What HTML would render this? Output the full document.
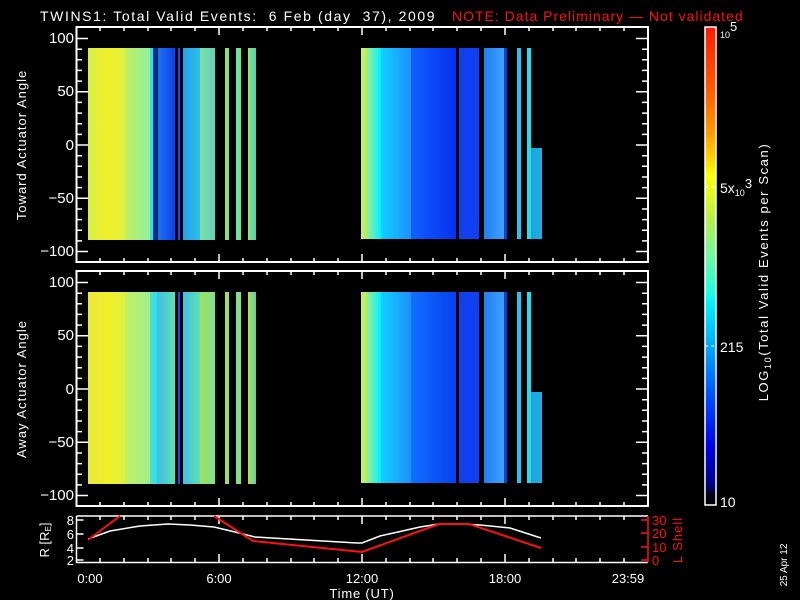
<!DOCTYPE html>
<html><head><meta charset="utf-8"><style>
html,body{margin:0;padding:0;background:#000;}
body{width:800px;height:600px;position:relative;overflow:hidden;font-family:"Liberation Sans",sans-serif;color:#fff;}
.t{position:absolute;white-space:nowrap;font-size:14px;line-height:14px;}
.blk{position:absolute;}
</style></head><body>

<div class="t" style="left:40px;top:9px;font-size:14px;letter-spacing:1.6px;">TWINS1: Total Valid Events:&nbsp; 6 Feb (day&nbsp; 37), 2009</div>
<div class="t" style="left:452px;top:9px;color:#ff1010;font-size:14px;letter-spacing:1px;">NOTE: Data Preliminary &#8212; Not validated</div>

<!-- data panel 1 -->
<div class="blk" style="left:88px;top:48px;width:170px;height:192px;background:linear-gradient(90deg,#d8f048 0px,#f0f028 20px,#e0f040 37px,#c0f060 37px,#90f0a0 62px,#30e0f0 62px,#30e0f0 65px,#0a2a80 65px,#0a2a80 70px,#2070f0 70px,#1040e8 87px,#000 87px,#000 90px,#1050f0 90px,#1050f0 92px,#000 92px,#000 95px,#20a0f0 95px,#30c0e0 112px,#80e0a0 112px,#60d0c0 127px,#000 127px,#000 137px,#90e070 137px,#90e070 141px,#000 141px,#000 148px,#70e0a0 148px,#70e0a0 153px,#000 153px,#000 160px,#a0e060 160px,#40d0d0 168px,#000 168px);"></div>
<div class="blk" style="left:361px;top:48px;width:181px;height:191px;background:linear-gradient(90deg,#e0f040 0px,#40f0e0 14px,#00f0ff 20px,#10d0ff 20px,#2090ff 50px,#1060ff 50px,#0830f0 95px,#000 95px,#000 98px,#1040f0 98px,#1040f0 118px,#000 118px,#000 123px,#2080f0 123px,#40a0ff 143px,#1040d0 143px,#1040d0 146px,#000 146px,#000 156px,#30c0f0 156px,#30c0f0 160px,#000 160px,#000 166px,#20e0f0 166px,#20e0f0 170px,#20a0e0 170px,#20b0e0 181px);"></div>
<div class="blk" style="left:531px;top:48px;width:11px;height:100px;background:#000;"></div>
<!-- data panel 2 -->
<div class="blk" style="left:88px;top:292px;width:170px;height:192px;background:linear-gradient(90deg,#e8e840 0px,#f0f028 20px,#e0f040 37px,#c0f060 37px,#a0f090 62px,#50e0d0 62px,#30e0f0 68px,#40c0e0 70px,#60e0b0 87px,#000 87px,#000 90px,#1050f0 90px,#1050f0 92px,#000 92px,#000 95px,#40c0e0 95px,#60e0b0 112px,#a0e060 112px,#80e090 127px,#000 127px,#000 137px,#a0e060 137px,#a0e060 141px,#000 141px,#000 148px,#80e090 148px,#80e090 153px,#000 153px,#000 160px,#b0e050 160px,#60d0b0 168px,#000 168px);"></div>
<div class="blk" style="left:361px;top:292px;width:181px;height:191px;background:linear-gradient(90deg,#e0f040 0px,#40f0e0 14px,#00f0ff 20px,#10d0ff 20px,#2090ff 50px,#1070ff 50px,#0840f0 95px,#000 95px,#000 98px,#1040f0 98px,#1040f0 118px,#000 118px,#000 123px,#2080f0 123px,#40a0ff 143px,#1040d0 143px,#1040d0 146px,#000 146px,#000 156px,#30c0f0 156px,#30c0f0 160px,#000 160px,#000 166px,#20e0f0 166px,#20e0f0 170px,#20a0e0 170px,#20b0e0 181px);"></div>
<div class="blk" style="left:531px;top:292px;width:11px;height:100px;background:#000;"></div>

<svg width="800" height="600" style="position:absolute;left:0;top:0;" xmlns="http://www.w3.org/2000/svg">
<defs>
<g id="yt" stroke="#fff" stroke-width="1.5">
<path d="M76 38.5h12M76 91.8h12M76 145h12M76 198.3h12M76 251.5h12M648 38.5h-12M648 91.8h-12M648 145h-12M648 198.3h-12M648 251.5h-12"/>
<path d="M76 49.2h6M76 59.8h6M76 70.4h6M76 81.1h6M76 102.4h6M76 113.1h6M76 123.7h6M76 134.4h6M76 155.7h6M76 166.3h6M76 177h6M76 187.6h6M76 209h6M76 219.6h6M76 230.3h6M76 240.9h6M648 49.2h-6M648 59.8h-6M648 70.4h-6M648 81.1h-6M648 102.4h-6M648 113.1h-6M648 123.7h-6M648 134.4h-6M648 155.7h-6M648 166.3h-6M648 177h-6M648 187.6h-6M648 209h-6M648 219.6h-6M648 230.3h-6M648 240.9h-6"/>
<path d="M219 27v8M362 27v8M505 27v8M219 262v-8M362 262v-8M505 262v-8M100 27v4M124 27v4M148 27v4M171 27v4M195 27v4M243 27v4M267 27v4M291 27v4M314 27v4M338 27v4M386 27v4M410 27v4M433 27v4M457 27v4M481 27v4M529 27v4M553 27v4M576 27v4M600 27v4M624 27v4M100 262v-4M124 262v-4M148 262v-4M171 262v-4M195 262v-4M243 262v-4M267 262v-4M291 262v-4M314 262v-4M338 262v-4M386 262v-4M410 262v-4M433 262v-4M457 262v-4M481 262v-4M529 262v-4M553 262v-4M576 262v-4M600 262v-4M624 262v-4"/>
<rect x="76.5" y="27" width="571.5" height="235" fill="none" stroke-width="2"/>
</g>
<linearGradient id="cb" x1="0" y1="0" x2="0" y2="1">
<stop offset="0" stop-color="#ff1a00"/><stop offset="0.14" stop-color="#ff6000"/><stop offset="0.22" stop-color="#ff9a00"/><stop offset="0.28" stop-color="#ffd800"/><stop offset="0.31" stop-color="#ffff00"/><stop offset="0.40" stop-color="#b8f048"/><stop offset="0.48" stop-color="#70f8a0"/><stop offset="0.55" stop-color="#20ffe0"/><stop offset="0.58" stop-color="#00f0ff"/><stop offset="0.68" stop-color="#00a0ff"/><stop offset="0.79" stop-color="#0040ff"/><stop offset="0.88" stop-color="#0000e8"/><stop offset="0.96" stop-color="#000080"/><stop offset="0.975" stop-color="#000020"/><stop offset="1" stop-color="#000"/>
</linearGradient>
</defs>
<use href="#yt"/>
<use href="#yt" y="244"/>
<g fill="#fff" font-family="Liberation Sans, sans-serif" font-size="15" text-anchor="end">
<text x="74" y="43">100</text><text x="74" y="96">50</text><text x="74" y="150">0</text><text x="74" y="203">−50</text><text x="74" y="256">−100</text>
<text x="74" y="287">100</text><text x="74" y="340">50</text><text x="74" y="394">0</text><text x="74" y="447">−50</text><text x="74" y="500">−100</text>
</g>
<g fill="#fff" font-family="Liberation Sans, sans-serif" font-size="13" text-anchor="middle">
<text transform="translate(26,145) rotate(-90)" letter-spacing="1">Toward Actuator Angle</text>
<text transform="translate(26,389) rotate(-90)" letter-spacing="1">Away Actuator Angle</text>
<text transform="translate(768,272) rotate(-90)" letter-spacing="1.6">LOG<tspan font-size="9" dy="3">10</tspan><tspan dy="-3">(Total Valid Events per Scan)</tspan></text>
<text transform="translate(787,565) rotate(-90)" font-size="10">25 Apr 12</text>
</g>
<!-- colorbar -->
<rect x="705" y="27" width="11" height="478" fill="url(#cb)" stroke="#fff" stroke-width="1.5"/>
<path d="M705 187h11M705 346h11" stroke="#fff" stroke-width="1" stroke-dasharray="3 3"/>
<g fill="#fff" font-family="Liberation Sans, sans-serif" font-size="14">
<text x="720" y="38" font-size="9">10<tspan font-size="13" dy="-7">5</tspan></text>
<text x="720" y="193">5x<tspan font-size="9" dy="3">10</tspan><tspan font-size="13" dy="-8">3</tspan></text>
<text x="720" y="352">215</text>
<text x="720" y="507">10</text>
</g>
<!-- bottom panel -->
<g stroke="#fff" stroke-width="1.5" fill="none">
<path d="M76.5 516v46.5H648M76.5 516H648"/>
<path d="M76.5 520h7M76.5 534h7M76.5 548h7M76.5 560h7"/>
<path d="M219 562v-8M362 562v-8M505 562v-8M219 516v8M362 516v8M505 516v8M100 562v-4M124 562v-4M148 562v-4M171 562v-4M195 562v-4M243 562v-4M267 562v-4M291 562v-4M314 562v-4M338 562v-4M386 562v-4M410 562v-4M433 562v-4M457 562v-4M481 562v-4M529 562v-4M553 562v-4M576 562v-4M600 562v-4M624 562v-4M100 516v4M124 516v4M148 516v4M171 516v4M195 516v4M243 516v4M267 516v4M291 516v4M314 516v4M338 516v4M386 516v4M410 516v4M433 516v4M457 516v4M481 516v4M529 516v4M553 516v4M576 516v4M600 516v4M624 516v4"/>
<path d="M88 539L110 531L140 526L168 524L190 525L214 527L235 532L255 537L357 543L362 543L380 536L398 532L420 527L439 524L460 524L480 525L510 528L541 538" stroke-width="1.5"/>
</g>
<g stroke="#ff1010" stroke-width="1.5" fill="none">
<path d="M648 516v46.5M648 520h-7M648 533h-7M648 547h-7M648 560h-7"/>
<path d="M88 540L120 516M214 516L253 541L362 552L439 524L469 524L541 548" stroke-width="2"/>
</g>
<g fill="#fff" font-family="Liberation Sans, sans-serif" font-size="13">
<g text-anchor="end"><text x="74" y="525">8</text><text x="74" y="539">6</text><text x="74" y="553">4</text><text x="74" y="565">2</text></g>
<text transform="translate(49,540) rotate(-90)" text-anchor="middle">R [R<tspan font-size="8" dy="2">E</tspan><tspan dy="-2">]</tspan></text>
<g text-anchor="middle"><text x="90" y="583">0:00</text><text x="219" y="583">6:00</text><text x="362" y="583">12:00</text><text x="505" y="583">18:00</text><text x="628" y="583">23:59</text>
<text x="362" y="598" letter-spacing="0.8">Time (UT)</text></g>
</g>
<g fill="#ff1010" font-family="Liberation Sans, sans-serif" font-size="13">
<text x="652" y="525">30</text><text x="652" y="538">20</text><text x="652" y="552">10</text><text x="652" y="565">0</text>
<text transform="translate(682,540) rotate(-90)" text-anchor="middle" letter-spacing="1">L Shell</text>
</g>
</svg>
</body></html>
